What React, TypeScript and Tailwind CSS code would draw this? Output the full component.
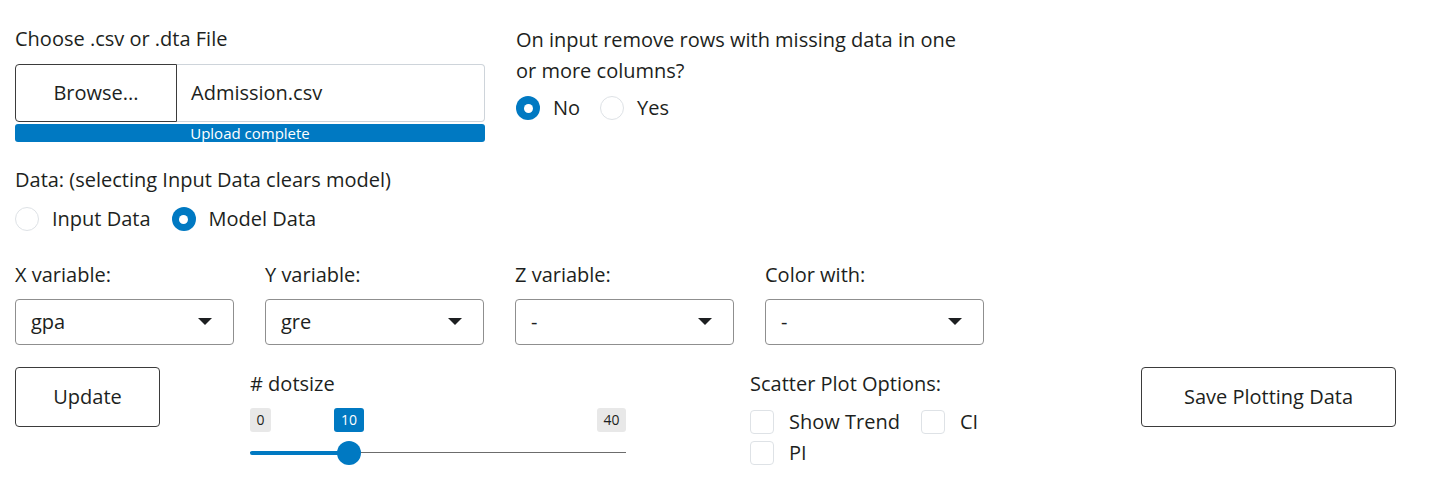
import React from 'react';

const font = { fontFamily: '"Open Sans", "Noto Sans", sans-serif' };

function Radio({ checked, label }: { checked?: boolean; label: string }) {
  return (
    <label className="flex items-center h-[28px]">
      <span
        className={
          checked
            ? 'w-[24px] h-[24px] rounded-full bg-[#0079c2] flex items-center justify-center'
            : 'w-[24px] h-[24px] rounded-full border border-[#dee2e6] bg-white'
        }
      >
        {checked && <span className="w-[9px] h-[9px] rounded-full bg-white" />}
      </span>
      <span className="ml-[13px]">{label}</span>
    </label>
  );
}

function Checkbox({ label }: { label: string }) {
  return (
    <label className="flex items-center h-[24px]">
      <span className="w-[24px] h-[24px] rounded-[4px] border border-[#dee2e6] bg-white" />
      <span className="ml-[15px] leading-[24px]">{label}</span>
    </label>
  );
}

function Select({ label, value }: { label: string; value: string }) {
  return (
    <div className="w-[219px]">
      <div className="h-[30px] leading-[30px]">{label}</div>
      <div className="mt-[9px] h-[46px] border border-[#8f8f8f] rounded-[4px] flex items-center justify-between pl-[15px] pr-[21px] bg-white">
        <span>{value}</span>
        <svg width="14" height="8" viewBox="0 0 14 8">
          <path d="M0 0 L14 0 L7 7 Z" fill="#1d1f21" />
        </svg>
      </div>
    </div>
  );
}

export default function App() {
  return (
    <div className="w-[1430px] h-[502px] bg-white text-[#1d1f21] text-[20px] pl-[15px] pt-[24px]" style={font}>
      {/* file + missing data */}
      <div className="flex gap-[31px]">
        <div className="w-[470px]">
          <div className="h-[30px] leading-[30px]">Choose .csv or .dta File</div>
          <div className="mt-[10px] flex h-[58px]">
            <div className="w-[162px] border border-[#3b3b3b] rounded-l-[4px] flex items-center justify-center bg-white">
              Browse...
            </div>
            <div className="flex-1 border border-l-0 border-[#ced4da] rounded-r-[4px] flex items-center pl-[14px]">
              Admission.csv
            </div>
          </div>
          <div className="mt-[2px] h-[18px] rounded-[3px] bg-[#0079c2] text-white text-[15px] leading-[18px] text-center">
            Upload complete
          </div>
        </div>
        <div className="w-[455px]">
          <div className="leading-[31px]">On input remove rows with missing data in one or more columns?</div>
          <div className="mt-[8px] flex gap-[20px]">
            <Radio checked label="No" />
            <Radio label="Yes" />
          </div>
        </div>
      </div>

      {/* data choice */}
      <div className="mt-[23px] h-[30px] leading-[30px]">Data: (selecting Input Data clears model)</div>
      <div className="mt-[10px] flex gap-[21px]">
        <Radio label="Input Data" />
        <Radio checked label="Model Data" />
      </div>

      {/* variable selects */}
      <div className="mt-[27px] flex gap-[31px]">
        <Select label="X variable:" value="gpa" />
        <Select label="Y variable:" value="gre" />
        <Select label="Z variable:" value="-" />
        <Select label="Color with:" value="-" />
      </div>

      {/* bottom row */}
      <div className="mt-[22px] flex">
        <div className="w-[145px] h-[60px] border border-[#3b3b3b] rounded-[4px] flex items-center justify-center">
          Update
        </div>
        <div className="ml-[90px] w-[376px] pt-[3px]">
          <div className="h-[28px] leading-[28px]"># dotsize</div>
          <div className="relative mt-[10px] h-[60px]">
            <span className="absolute left-0 top-0 h-[24px] w-[21px] text-center rounded-[3px] bg-[#e8e8e8] text-[14px] leading-[24px]">0</span>
            <span className="absolute left-[84px] top-0 h-[24px] w-[30px] text-center rounded-[3px] bg-[#0079c2] text-white text-[14px] leading-[24px]">10</span>
            <span className="absolute right-0 top-0 h-[24px] w-[29px] text-center rounded-[3px] bg-[#e8e8e8] text-[14px] leading-[24px]">40</span>
            <div className="absolute left-0 right-0 top-[44px] h-[1px] bg-[#6c6c6c]" />
            <div className="absolute left-0 w-[98px] top-[43px] h-[4px] rounded-full bg-[#0079c2]" />
            <div className="absolute left-[87px] top-[33px] w-[24px] h-[24px] rounded-full bg-[#0079c2]" />
          </div>
        </div>
        <div className="ml-[124px] w-[300px] pt-[3px]">
          <div className="h-[28px] leading-[28px]">Scatter Plot Options:</div>
          <div className="mt-[12px] flex gap-[21px]">
            <Checkbox label="Show Trend" />
            <Checkbox label="CI" />
          </div>
          <div className="mt-[7px] flex">
            <Checkbox label="PI" />
          </div>
        </div>
        <div className="ml-[91px] w-[255px] h-[60px] border border-[#3b3b3b] rounded-[4px] flex items-center justify-center">
          Save Plotting Data
        </div>
      </div>
    </div>
  );
}
